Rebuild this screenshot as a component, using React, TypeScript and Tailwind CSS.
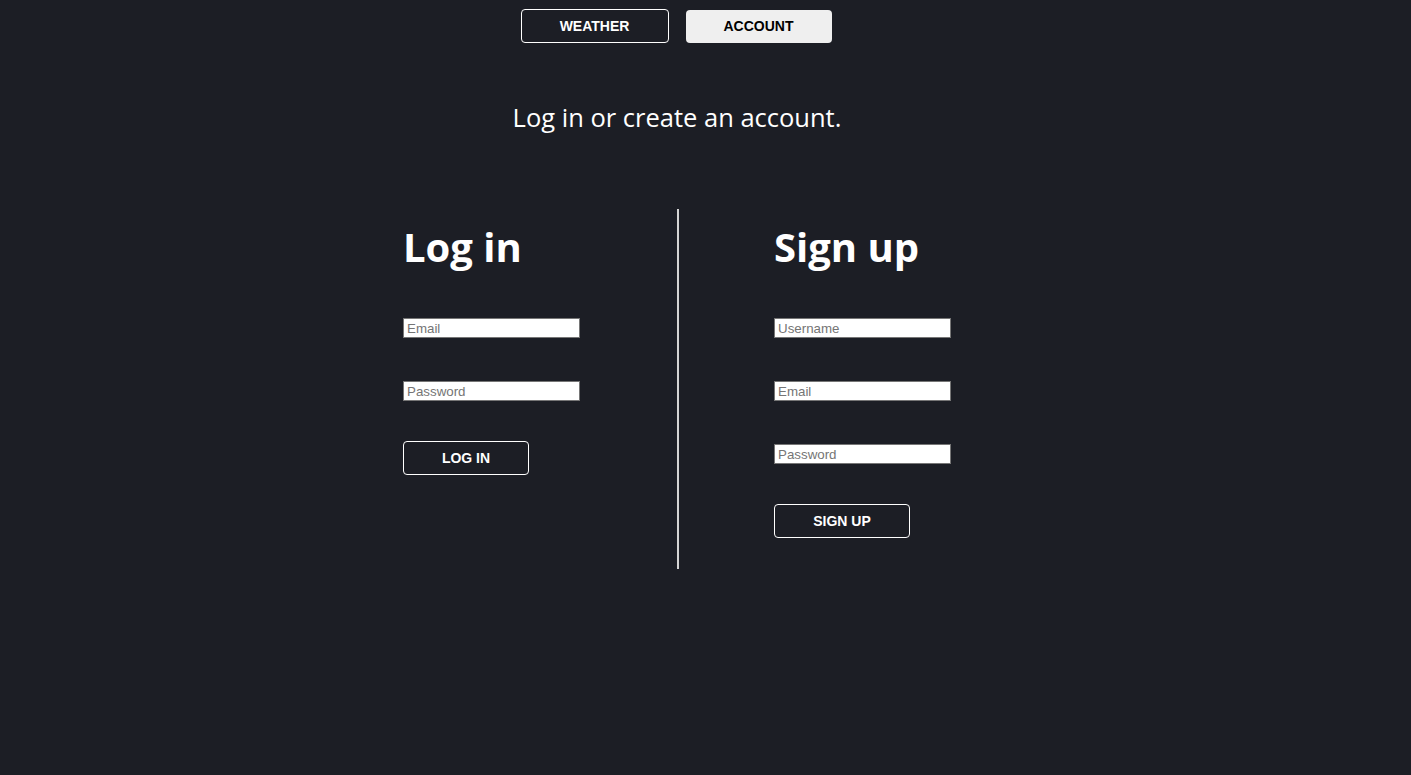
import React from "react";

const btnText = "font-['Liberation_Sans',Arial,sans-serif] font-bold text-[14px] uppercase";
const inputCls =
  "block w-[177px] h-[20px] border border-[#767676] bg-white px-[3px] text-[13.33px] text-black placeholder:text-[#757575] font-['Liberation_Sans',Arial,sans-serif] outline-none";

const Field: React.FC<{ placeholder: string; type?: string }> = ({ placeholder, type = "text" }) => (
  <input type={type} placeholder={placeholder} className={inputCls} />
);

export default function App() {
  return (
    <div className="min-h-[775px] w-full bg-[#1c1e25] text-white font-['Open_Sans',sans-serif]">
      <div className="w-[1354px] flex flex-col items-center">
        <nav className="mr-[2px] flex items-start gap-[17px] pt-[9px]">
          <button className={`w-[148px] h-[34px] rounded-[4px] border border-white text-white ${btnText}`}>
            Weather
          </button>
          <button className={`mt-[1px] w-[146px] h-[33px] rounded-[4px] bg-[#efefef] text-black ${btnText}`}>
            Account
          </button>
        </nav>

        <p className="mt-[57px] text-[25.5px] leading-[35px]">Log in or create an account.</p>

        <div className="ml-[2px] mt-[74px] flex">
          <div className="w-[274px] flex flex-col items-start">
            <h1 className="mt-[18px] text-[40px] font-bold leading-[40px]">Log in</h1>
            <div className="mt-[51px] flex flex-col gap-[43px]">
              <Field placeholder="Email" />
              <Field placeholder="Password" type="password" />
            </div>
            <button className={`mt-[40px] w-[126px] h-[34px] rounded-[4px] border border-white text-white ${btnText}`}>
              Log in
            </button>
          </div>

          <div className="w-[2px] h-[360px] bg-[#d4d4d4]" />

          <div className="w-[274px] pl-[95px] flex flex-col items-start">
            <h1 className="mt-[18px] text-[40px] font-bold leading-[40px]">Sign up</h1>
            <div className="mt-[51px] flex flex-col gap-[43px]">
              <Field placeholder="Username" />
              <Field placeholder="Email" />
              <Field placeholder="Password" type="password" />
            </div>
            <button className={`mt-[40px] w-[136px] h-[34px] rounded-[4px] border border-white text-white ${btnText}`}>
              Sign up
            </button>
          </div>
        </div>
      </div>
    </div>
  );
}
